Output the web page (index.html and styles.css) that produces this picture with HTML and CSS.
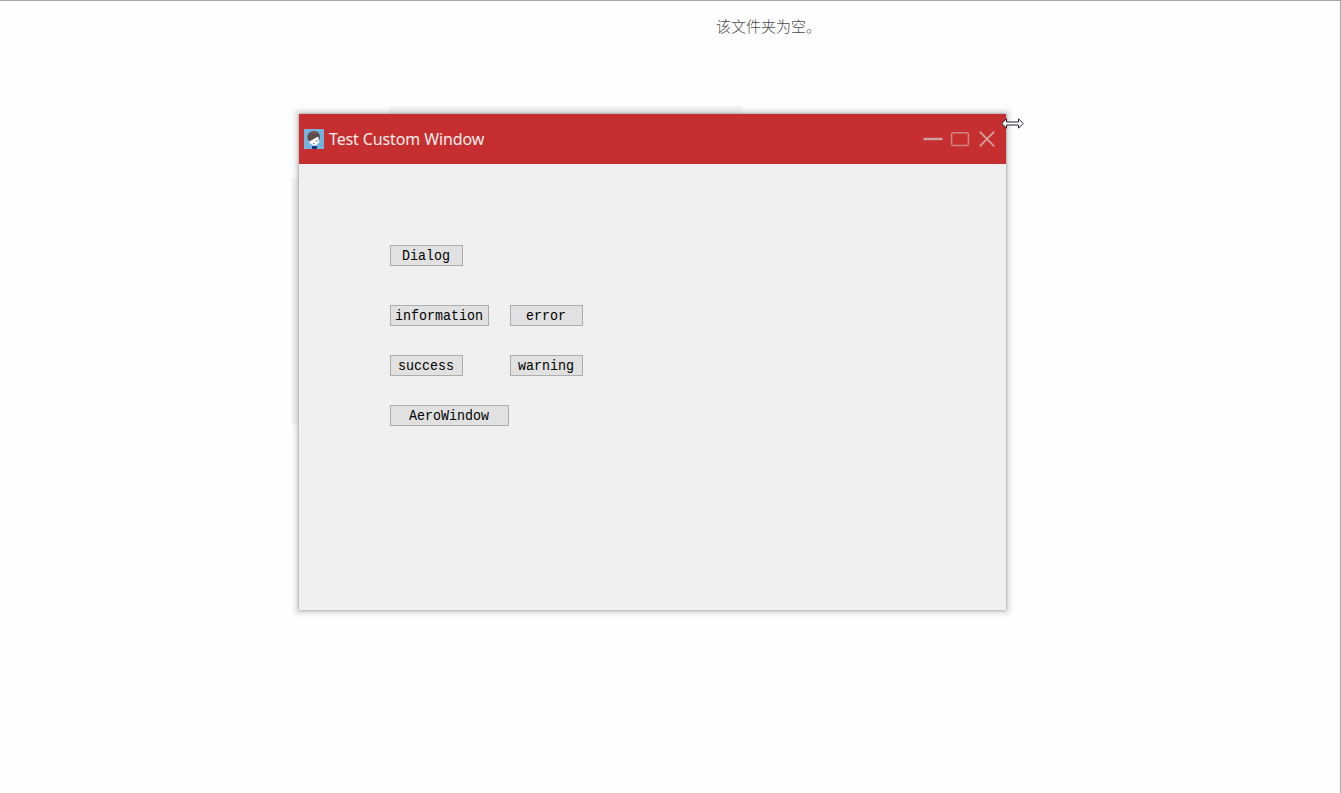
FILE: index.html
```html
<!DOCTYPE html>
<html lang="zh-CN">
<head>
<meta charset="utf-8">
<title>Test Custom Window</title>
<link rel="stylesheet" href="styles.css">
</head>
<body>
<main class="desktop">
  <p class="empty-note">该文件夹为空。</p>
  <section class="window">
    <div class="edge edge-top"></div>
    <div class="edge edge-left"></div>
    <header class="titlebar">
      <svg class="avatar" viewBox="0 0 20 20">
        <path fill="#73b3df" d="M0 0h20v20H0z"/>
        <path fill="#fff" d="M5 9 14.800 7l.5 6-3.300 3.500H9L5.500 14z"/>
        <path fill="#604b49" d="M3.600 10C2.800 5 6 2 10 2c4 0 6.500 3 5.800 7l-.8 3-.8-4.500C11 9 8 11 5.500 12.500z"/>
        <path fill="#846057" d="M6 4.500C8 2.500 12 2.500 14 5c-2-.8-5-.8-8-.5z"/>
        <path fill="#475466" d="M12 11.500h1.500v1H12zM9 14h1.500v.7H9z"/>
        <path fill="#123d7e" d="M8 17h5v3H8z"/>
      </svg>
      <h1 class="title">Test Custom Window</h1>
      <svg class="controls" viewBox="0 0 74 20" fill="none" stroke="#d49b98">
        <path d="M.5 10h19" stroke="#c8a5a3" stroke-width="2.400"/>
        <rect x="28.600" y="3.700" width="16.800" height="12.700" rx="1.600" stroke="#cf8583" stroke-width="1.500"/>
        <path d="m56.700 2.700 14.600 14.600M71.300 2.700 56.700 17.300" stroke="#d5a29f" stroke-width="1.700"/>
      </svg>
    </header>
    <div class="content">
      <div class="row row-first"><button class="btn"><span class="label">Dialog</span></button></div>
      <div class="row">
        <button class="btn btn-info"><span class="label">information</span></button>
        <button class="btn"><span class="label">error</span></button>
      </div>
      <div class="row">
        <button class="btn"><span class="label">success</span></button>
        <button class="btn"><span class="label">warning</span></button>
      </div>
      <div class="row"><button class="btn btn-aero"><span class="label">AeroWindow</span></button></div>
    </div>
    <svg class="cursor" viewBox="0 0 23 11">
      <path fill="#fff" stroke="#25212e" d="M.8 5.500 5.500.8v3.200h12V.8l4.700 4.700-4.700 4.700V7h-12v3.200z"/>
    </svg>
  </section>
</main>
</body>
</html>
```
FILE: styles.css
```css
* {
  box-sizing: border-box;
}

body {
  margin: 0;
  background: #fefefe;
}

.desktop {
  height: 793px;
  border-top: 1px solid #a5a5a5;
  border-right: 1px solid #a5a5a5;
  overflow: hidden;
}

.empty-note {
  margin: 14px 0 0 716px;
  height: 22px;
  font: 300 15px/22px "Noto Sans CJK SC", sans-serif;
  color: #484848;
}

.window {
  position: relative;
  width: 707px;
  height: 496px;
  margin: 77px 0 0 299px;
  background: #f0f0f0;
  box-shadow:
    0 0 3px rgba(0, 0, 0, 0.35),
    0 0 5px 4px rgba(0, 0, 0, 0.12);
}

.edge {
  position: absolute;
  background: rgba(0, 0, 0, 0.03);
}

.edge-top {
  left: 90px;
  top: -8px;
  width: 353px;
  height: 8px;
}

.edge-left {
  left: -8px;
  top: 64px;
  width: 8px;
  height: 247px;
}

.titlebar {
  display: flex;
  align-items: center;
  height: 50px;
  padding: 0 9px 0 5px;
  background: #c52f2f;
}

.avatar {
  width: 20px;
  height: 20px;
}

.title {
  margin: 0 0 0 5px;
  font: 400 16px/22px "Noto Sans", sans-serif;
  letter-spacing: -0.12px;
  color: #fbecec;
}

.controls {
  width: 74px;
  height: 20px;
  margin-left: auto;
}

.content {
  display: flex;
  flex-direction: column;
  gap: 29px;
  padding: 81px 0 0 91px;
}

.row {
  display: grid;
  grid-template-columns: 120px 120px;
  justify-items: start;
}

.row-first {
  margin-bottom: 10px;
}

.btn {
  width: 73px;
  height: 21px;
  padding: 2px 1px 0 0;
  border: 1px solid #adadad;
  background: #e1e1e1;
  color: #000;
  font: 13.333px/17px "Liberation Mono", monospace;
}

.label {
  display: block;
  transform: scaleY(1.12);
}

.btn-info {
  width: 99px;
}

.btn-aero {
  width: 119px;
}

.cursor {
  position: absolute;
  left: 702px;
  top: 4px;
  width: 23px;
  height: 11px;
}
```
